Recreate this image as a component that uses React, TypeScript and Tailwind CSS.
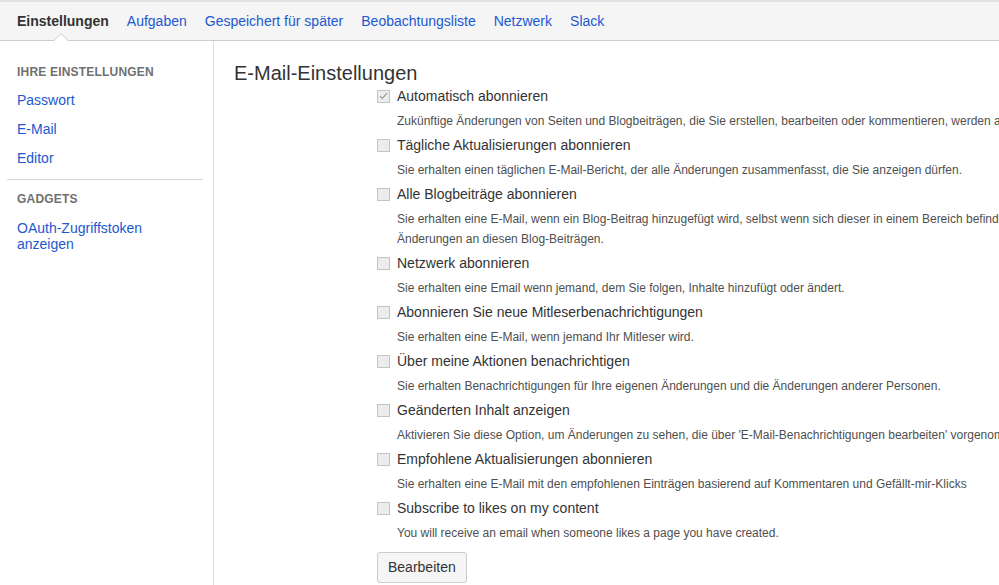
import React from "react";

const items: { label: string; desc: string[]; checked?: boolean }[] = [
  {
    label: "Automatisch abonnieren",
    desc: ["Zukünftige Änderungen von Seiten und Blogbeiträgen, die Sie erstellen, bearbeiten oder kommentieren, werden automatisch beobachtet."],
    checked: true,
  },
  {
    label: "Tägliche Aktualisierungen abonnieren",
    desc: ["Sie erhalten einen täglichen E-Mail-Bericht, der alle Änderungen zusammenfasst, die Sie anzeigen dürfen."],
  },
  {
    label: "Alle Blogbeiträge abonnieren",
    desc: [
      "Sie erhalten eine E-Mail, wenn ein Blog-Beitrag hinzugefügt wird, selbst wenn sich dieser in einem Bereich befindet, den Sie nicht beobachten. Sie erhalten keine",
      "Änderungen an diesen Blog-Beiträgen.",
    ],
  },
  {
    label: "Netzwerk abonnieren",
    desc: ["Sie erhalten eine Email wenn jemand, dem Sie folgen, Inhalte hinzufügt oder ändert."],
  },
  {
    label: "Abonnieren Sie neue Mitleserbenachrichtigungen",
    desc: ["Sie erhalten eine E-Mail, wenn jemand Ihr Mitleser wird."],
  },
  {
    label: "Über meine Aktionen benachrichtigen",
    desc: ["Sie erhalten Benachrichtigungen für Ihre eigenen Änderungen und die Änderungen anderer Personen."],
  },
  {
    label: "Geänderten Inhalt anzeigen",
    desc: ["Aktivieren Sie diese Option, um Änderungen zu sehen, die über 'E-Mail-Benachrichtigungen bearbeiten' vorgenommen wurden."],
  },
  {
    label: "Empfohlene Aktualisierungen abonnieren",
    desc: ["Sie erhalten eine E-Mail mit den empfohlenen Einträgen basierend auf Kommentaren und Gefällt-mir-Klicks"],
  },
  {
    label: "Subscribe to likes on my content",
    desc: ["You will receive an email when someone likes a page you have created."],
  },
];

function Checkbox({ checked }: { checked?: boolean }) {
  return (
    <span className="w-[13px] h-[13px] border border-[#c4c4c4] bg-[#ececec] flex items-center justify-center shrink-0">
      {checked && (
        <svg width="9" height="8" viewBox="0 0 9 8">
          <path d="M1 4.2 L3.4 6.5 L8 1.2" fill="none" stroke="#9a9a9a" strokeWidth="1.2" />
        </svg>
      )}
    </span>
  );
}

export default function App() {
  const font = { fontFamily: '"Liberation Sans", Arial, sans-serif' };
  return (
    <div className="w-[999px] h-[585px] overflow-hidden bg-white text-[#333]" style={font}>
      {/* Header */}
      <div className="relative h-[41px] border-t-2 border-[#e2e2e2] border-b border-b-[#cccccc] bg-[#f5f5f5] flex items-center gap-[18px] pl-[17px] text-[14px] whitespace-nowrap">
        <span className="font-bold text-[#333]">Einstellungen</span>
        <span className="text-[#2258cf]">Aufgaben</span>
        <span className="text-[#2258cf]">Gespeichert für später</span>
        <span className="text-[#2258cf]">Beobachtungsliste</span>
        <span className="text-[#2258cf]">Netzwerk</span>
        <span className="text-[#2258cf]">Slack</span>
        <span className="absolute left-[53px] bottom-[-1px] w-0 h-0 border-l-[8px] border-r-[8px] border-b-[8px] border-l-transparent border-r-transparent border-b-[#cccccc]" />
        <span className="absolute left-[54px] bottom-[-1px] w-0 h-0 border-l-[7px] border-r-[7px] border-b-[7px] border-l-transparent border-r-transparent border-b-white" />
      </div>

      <div className="flex h-[544px]">
        {/* Sidebar */}
        <div className="w-[214px] shrink-0 border-r border-[#dddddd] pt-[23px]">
          <div className="pl-[17px] text-[12px] font-bold text-[#707070] tracking-[0.2px] leading-[16px]">IHRE EINSTELLUNGEN</div>
          <div className="pl-[17px] mt-[6px] flex flex-col text-[14px] text-[#2258cf]">
            <span className="leading-[29px]">Passwort</span>
            <span className="leading-[29px]">E-Mail</span>
            <span className="leading-[29px]">Editor</span>
          </div>
          <div className="ml-[7px] w-[196px] h-0 border-t border-[#d5d5d5] mt-[6px]" />
          <div className="pl-[17px] mt-[11px] text-[12px] font-bold text-[#707070] tracking-[0.2px] leading-[16px]">GADGETS</div>
          <div className="pl-[17px] mt-[13px] text-[14px] text-[#2258cf] leading-[16px]">
            OAuth-Zugriffstoken
            <br />
            anzeigen
          </div>
        </div>

        {/* Main */}
        <div className="flex-1 pl-[20px] pt-[20px] whitespace-nowrap overflow-hidden">
          <h1 className="text-[20px] leading-[24px] text-[#333] font-normal">E-Mail-Einstellungen</h1>
          <div className="ml-[143px] -mt-[1px]">
            {items.map((it, i) => (
              <div key={i} className="mb-[2px]">
                <div className="h-[24px] flex items-center gap-[7px]">
                  <Checkbox checked={it.checked} />
                  <span className="text-[14px] text-[#333]">{it.label}</span>
                </div>
                <div className="mt-[3px] pl-[20px] text-[12px] leading-[20px] text-[#4f4f4f]">
                  {it.desc.map((d, j) => (
                    <div key={j}>{d}</div>
                  ))}
                </div>
              </div>
            ))}
            <button className="mt-[7px] h-[31px] px-[10px] border border-[#cccccc] rounded-[3px] bg-[#f5f5f5] text-[14px] text-[#333]">
              Bearbeiten
            </button>
          </div>
        </div>
      </div>
    </div>
  );
}
